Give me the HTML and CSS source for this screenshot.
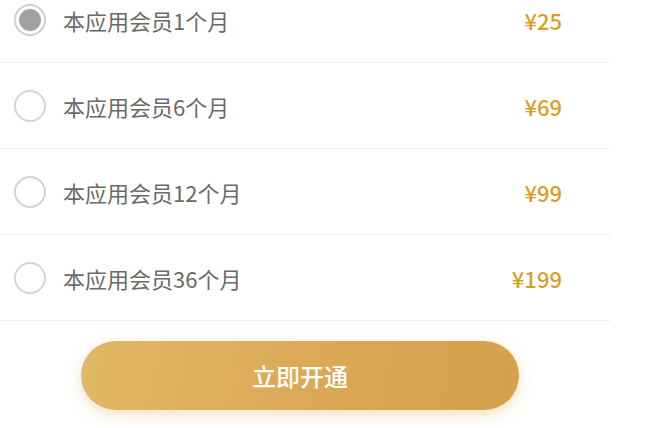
FILE: index.html
```html
<!DOCTYPE html>
<html lang="zh-CN">
<head>
<meta charset="utf-8">
<title>会员开通</title>
<link rel="stylesheet" href="styles.css">
</head>
<body>
<div class="page">
  <ul class="plans">
    <li class="plan">
      <span class="radio checked"><span class="dot"></span></span>
      <span class="name">本应用会员1个月</span>
      <span class="price">¥25</span>
    </li>
    <li class="plan">
      <span class="radio"></span>
      <span class="name">本应用会员6个月</span>
      <span class="price">¥69</span>
    </li>
    <li class="plan">
      <span class="radio"></span>
      <span class="name">本应用会员12个月</span>
      <span class="price">¥99</span>
    </li>
    <li class="plan">
      <span class="radio"></span>
      <span class="name">本应用会员36个月</span>
      <span class="price">¥199</span>
    </li>
  </ul>
  <div class="actions">
    <button class="buy">立即开通</button>
  </div>
</div>
</body>
</html>
```

FILE: styles.css
```css
html, body {
  margin: 0;
  padding: 0;
  background: #ffffff;
}
body {
  font-family: "Noto Sans CJK SC", "Noto Sans", sans-serif;
}
.page {
  width: 658px;
  padding-bottom: 16px;
}
.plans {
  list-style: none;
  margin: -23px 0 0 0;
  padding: 0;
  width: 610px;
}
.plan {
  display: flex;
  align-items: center;
  height: 85px;
  border-bottom: 1px solid #eeeeee;
  padding: 0 48px 0 14px;
}
.radio {
  box-sizing: border-box;
  width: 32px;
  height: 32px;
  border-radius: 50%;
  border: 2px solid #d4d4d4;
  display: flex;
  align-items: center;
  justify-content: center;
  flex: none;
}
.radio.checked {
  border-color: #cfcfcf;
}
.dot {
  width: 22px;
  height: 22px;
  border-radius: 50%;
  background: #a2a2a2;
}
.name {
  margin-left: 17px;
  font-size: 22px;
  color: #6a6a6a;
  flex: 1;
}
.price {
  font-size: 22px;
  font-weight: 500;
  color: #da9e26;
}
.actions {
  padding: 20px 0 0 81px;
}
.buy {
  width: 438px;
  height: 69px;
  border: none;
  border-radius: 35px;
  background: linear-gradient(100deg, #e2b964 0%, #dba957 50%, #d4a14c 100%);
  box-shadow: 0 5px 14px rgba(220, 170, 80, 0.35);
  color: #ffffff;
  font-family: "Noto Sans CJK SC", "Noto Sans", sans-serif;
  font-size: 24px;
  font-weight: 500;
  padding: 0;
}
```
